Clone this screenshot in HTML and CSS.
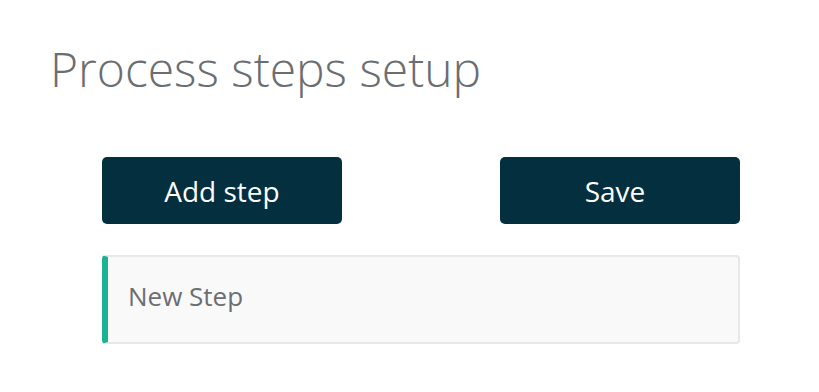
FILE: index.html
```html
<!DOCTYPE html>
<html lang="en">
<head>
    <meta charset="UTF-8">
    <meta name="viewport" content="width=device-width, initial-scale=1.0">
    <title>Process steps setup</title>
    <link rel="stylesheet" href="styles.css">
</head>
<body>
    <h1>Process steps setup</h1>
    <div class="container">
        <div class="actions">
            <button type="button">Add step</button>
            <button type="button" class="save">Save</button>
        </div>
        <div class="step">New Step</div>
    </div>
</body>
</html>
```

FILE: styles.css
```css
body {
    font-family: "Open Sans", sans-serif;
    margin: 0;
    padding: 38px 0 0 50px;
    background-color: #ffffff;
}
h1 {
    margin: 0;
    font-size: 48px;
    font-weight: 300;
    color: #6a6e72;
    line-height: 62px;
}
.container {
    width: 638px;
    margin: 57px 0 0 52px;
}
.actions {
    display: flex;
    justify-content: space-between;
}
button {
    width: 240px;
    height: 67px;
    padding: 0;
    background-color: #042f3f;
    color: #ffffff;
    border: none;
    border-radius: 5px;
    font-family: "Open Sans", sans-serif;
    font-size: 28px;
}
.save {
    padding-right: 10px;
}
.step {
    margin-top: 31px;
    height: 89px;
    box-sizing: border-box;
    padding: 0 0 8px 20px;
    display: flex;
    align-items: center;
    background-color: #f9f9f9;
    border: 2px solid #e6e9ec;
    border-left: 6px solid #1bb394;
    border-radius: 4px;
    color: #6b6e72;
    font-size: 26px;
}
```
